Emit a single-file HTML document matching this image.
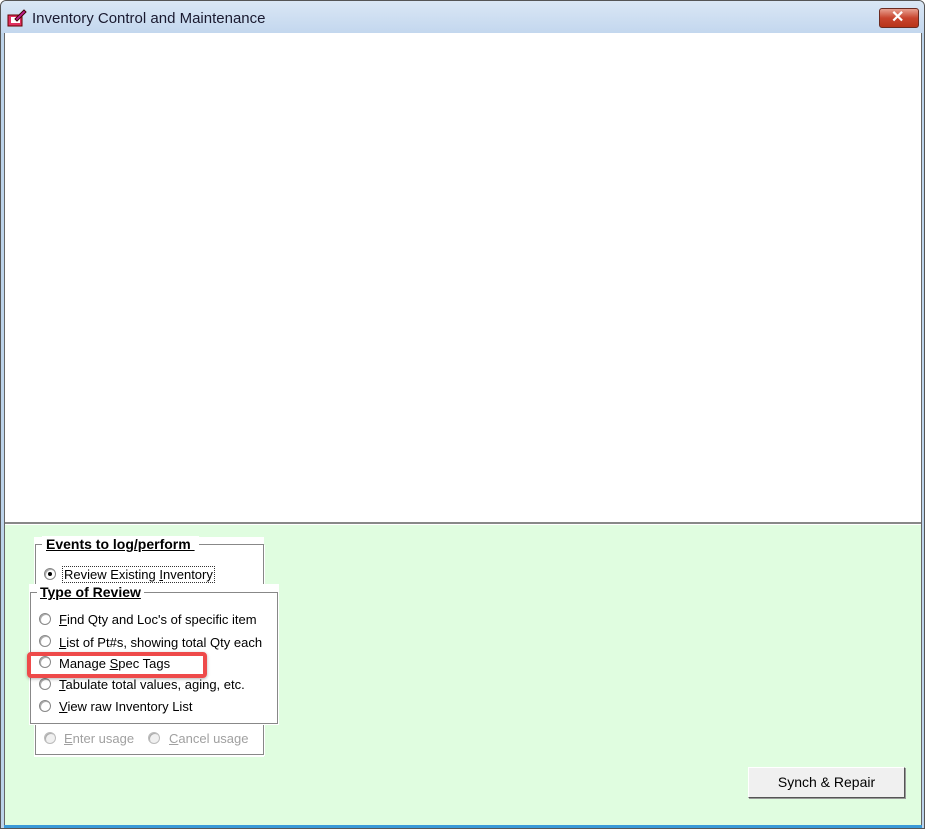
<!DOCTYPE html>
<html><head><style>
*{margin:0;padding:0;box-sizing:border-box}
body{width:925px;height:829px;overflow:hidden;background:#fff;font-family:"Liberation Sans",sans-serif;position:relative}
.abs{position:absolute}
.t{font-size:13px;color:#000;white-space:nowrap}
.rad{position:absolute;width:12px;height:12px;border-radius:50%;background:#fff;border:1px solid #888;box-shadow:inset 1px 1px 0 #aaa}
.dis{color:#a0a0a0}
</style></head><body>
<div class="abs" style="left:0;top:0;width:925px;height:829px;background:#bcd3ea;border:1px solid #555;border-radius:6px 6px 0 0"></div>
<div class="abs" style="left:1px;top:1px;width:923px;height:32px;background:linear-gradient(#dae7f5,#c3d7ee);border-radius:5px 5px 0 0"></div>
<svg class="abs" style="left:7px;top:9px" width="20" height="20" viewBox="0 0 20 20">
<rect x="1" y="6" width="14" height="11" fill="#e03060" stroke="#600" stroke-width="1"/>
<rect x="4" y="8" width="9" height="6" fill="#fff"/>
<path d="M8 10 L17 1 L19 3 L10 12 Z" fill="#c02090" stroke="#400"/>
</svg>
<div class="abs" style="left:32px;top:10px;font-size:15px;color:#1a1a30">Inventory Control and Maintenance</div>
<div class="abs" style="left:879px;top:8px;width:40px;height:20px;border-radius:3px;border:1px solid #6b2a20;background:linear-gradient(#e8a090,#c8442e 50%,#b83418)"></div>
<div class="abs" style="left:891px;top:7px;color:#fff;font-weight:bold;font-size:16px">✕</div>
<div class="abs" style="left:4px;top:33px;width:918px;height:793px;background:#fff;border-left:1px solid #666;border-right:1px solid #666"></div>
<div class="abs" style="left:5px;top:522px;width:916px;height:3px;background:#888;border-bottom:1px solid #fff"></div>
<div class="abs" style="left:5px;top:525px;width:916px;height:300px;background:#e0fde0"></div>
<div class="abs" style="left:4px;top:825px;width:918px;height:3px;background:#3a9ad8"></div>
<div class="abs" style="left:34px;top:537px;width:230px;height:220px;background:#fff"></div>
<div class="abs" style="left:35px;top:544px;width:229px;height:211px;border:1px solid #888;box-shadow:1px 1px 0 #fff"></div>
<div class="abs t" style="left:42px;top:536px;background:#fff;padding:0 4px;font-weight:bold;font-size:14px;text-decoration:underline">Events to log/perform&nbsp;</div>
<div class="rad" style="left:44px;top:568px"></div><div class="abs" style="left:48px;top:572px;width:4px;height:4px;border-radius:50%;background:#000"></div>
<div class="abs t" style="left:62px;top:566px;border:1px dotted #333;padding:0 1px">Review Existing <u>I</u>nventory</div>
<div class="rad" style="left:44px;top:732px;background:#f0f0f0;border-color:#bbb"></div>
<div class="abs t dis" style="left:64px;top:731px"><u>E</u>nter usage</div>
<div class="rad" style="left:148px;top:732px;background:#f0f0f0;border-color:#bbb"></div>
<div class="abs t dis" style="left:169px;top:731px"><u>C</u>ancel usage</div>
<div class="abs" style="left:29px;top:584px;width:250px;height:141px;background:#fff"></div>
<div class="abs" style="left:30px;top:592px;width:248px;height:132px;border:1px solid #888"></div>
<div class="abs t" style="left:37px;top:584px;background:#fff;padding:0 3px;font-weight:bold;font-size:14px;text-decoration:underline">Type of Review</div>
<div class="rad" style="left:39px;top:613px"></div><div class="abs t" style="left:59px;top:612px"><u>F</u>ind Qty and Loc's of specific item</div>
<div class="rad" style="left:39px;top:635px"></div><div class="abs t" style="left:59px;top:635px"><u>L</u>ist of Pt#s, showing total Qty each</div>
<div class="rad" style="left:39px;top:656px"></div><div class="abs t" style="left:59px;top:656px">Manage <u>S</u>pec Tags</div>
<div class="rad" style="left:39px;top:678px"></div><div class="abs t" style="left:59px;top:677px"><u>T</u>abulate total values, aging, etc.</div>
<div class="rad" style="left:39px;top:700px"></div><div class="abs t" style="left:59px;top:699px"><u>V</u>iew raw Inventory List</div>
<div class="abs" style="left:27px;top:652px;width:180px;height:26px;border:4px solid #ee4a4a;border-radius:4px;box-shadow:0 1px 3px rgba(0,0,0,.3)"></div>
<div class="abs" style="left:748px;top:767px;width:157px;height:31px;background:#f0f0f0;border:1px solid #fff;border-right-color:#555;border-bottom-color:#555;box-shadow:1px 1px 0 #999"></div>
<div class="abs t" style="left:748px;top:774px;width:157px;text-align:center;font-size:14px">Synch &amp; Repair</div>
</body></html>
